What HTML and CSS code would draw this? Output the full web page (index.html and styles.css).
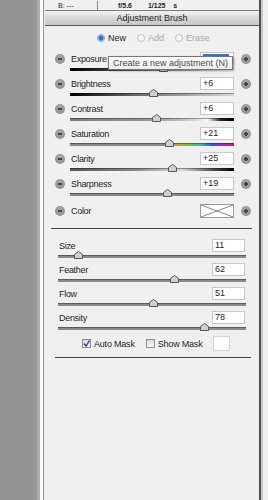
FILE: index.html
```html
<!DOCTYPE html>
<html lang="en">
<head>
  <meta charset="UTF-8">
  <title>Adjustment Brush</title>
  <link rel="stylesheet" href="styles.css">
</head>
<body>

  <div class="side"></div>
  <div class="side-edge"></div>

  <div class="panel">
    <!-- info strip -->
    <div class="info">
      <span class="info-b">B: ---</span>
      <span class="info-sep"></span>
      <span class="info-exif">f/5.6 &nbsp;1/125 s</span>
    </div>

    <div class="panel-title">Adjustment Brush</div>

    <!-- mode radios -->
    <div class="modes">
      <span class="radio on"><span class="dot"></span>New</span>
      <span class="radio off"><span class="dot"></span>Add</span>
      <span class="radio off"><span class="dot"></span>Erase</span>
    </div>

    <!-- adjustment sliders -->
    <div class="adjust">
      <div class="arow">
        <span class="pm minus"></span>
        <div class="amid">
          <div class="ahead"><span class="lbl">Exposure</span><span class="val"><span class="sel"></span></span></div>
          <div class="track t-exposure">
            <svg class="thumb" style="left:57%" width="9" height="8" viewBox="0 0 9 8"><path d="M.5 7.5V3.5L4.5.5l4 3v4z"/></svg>
          </div>
        </div>
        <span class="pm plus"></span>
        <div class="tooltip">Create a new adjustment (N)</div>
      </div>

      <div class="arow">
        <span class="pm minus"></span>
        <div class="amid">
          <div class="ahead"><span class="lbl">Brightness</span><span class="val">+6</span></div>
          <div class="track t-bright">
            <svg class="thumb" style="left:51%" width="9" height="8" viewBox="0 0 9 8"><path d="M.5 7.5V3.5L4.5.5l4 3v4z"/></svg>
          </div>
        </div>
        <span class="pm plus"></span>
      </div>

      <div class="arow">
        <span class="pm minus"></span>
        <div class="amid">
          <div class="ahead"><span class="lbl">Contrast</span><span class="val">+6</span></div>
          <div class="track t-contrast">
            <svg class="thumb" style="left:53%" width="9" height="8" viewBox="0 0 9 8"><path d="M.5 7.5V3.5L4.5.5l4 3v4z"/></svg>
          </div>
        </div>
        <span class="pm plus"></span>
      </div>

      <div class="arow">
        <span class="pm minus"></span>
        <div class="amid">
          <div class="ahead"><span class="lbl">Saturation</span><span class="val">+21</span></div>
          <div class="track t-sat">
            <svg class="thumb" style="left:60.5%" width="9" height="8" viewBox="0 0 9 8"><path d="M.5 7.5V3.5L4.5.5l4 3v4z"/></svg>
          </div>
        </div>
        <span class="pm plus"></span>
      </div>

      <div class="arow">
        <span class="pm minus"></span>
        <div class="amid">
          <div class="ahead"><span class="lbl">Clarity</span><span class="val">+25</span></div>
          <div class="track t-clarity">
            <svg class="thumb" style="left:62.5%" width="9" height="8" viewBox="0 0 9 8"><path d="M.5 7.5V3.5L4.5.5l4 3v4z"/></svg>
          </div>
        </div>
        <span class="pm plus"></span>
      </div>

      <div class="arow">
        <span class="pm minus"></span>
        <div class="amid">
          <div class="ahead"><span class="lbl">Sharpness</span><span class="val">+19</span></div>
          <div class="track t-sharp">
            <svg class="thumb" style="left:59.5%" width="9" height="8" viewBox="0 0 9 8"><path d="M.5 7.5V3.5L4.5.5l4 3v4z"/></svg>
          </div>
        </div>
        <span class="pm plus"></span>
      </div>

      <div class="crow">
        <span class="pm minus"></span>
        <div class="cmid">
          <span class="lbl">Color</span>
          <svg class="swatch" width="34" height="14" viewBox="0 0 34 14">
            <rect x=".5" y=".5" width="33" height="13" fill="#fff" stroke="#9a9a9a"/>
            <path d="M1 1L33 13M33 1L1 13" stroke="#6a6a6a" stroke-width=".8" fill="none"/>
          </svg>
        </div>
        <span class="pm plus"></span>
      </div>
    </div>

    <div class="rule"></div>

    <!-- brush settings -->
    <div class="brush">
      <div class="brow">
        <div class="bhead"><span class="lbl">Size</span><span class="val">11</span></div>
        <div class="track t-plain">
          <svg class="thumb" style="left:11%" width="9" height="8" viewBox="0 0 9 8"><path d="M.5 7.5V3.5L4.5.5l4 3v4z"/></svg>
        </div>
      </div>
      <div class="brow">
        <div class="bhead"><span class="lbl">Feather</span><span class="val">62</span></div>
        <div class="track t-plain">
          <svg class="thumb" style="left:62%" width="9" height="8" viewBox="0 0 9 8"><path d="M.5 7.5V3.5L4.5.5l4 3v4z"/></svg>
        </div>
      </div>
      <div class="brow">
        <div class="bhead"><span class="lbl">Flow</span><span class="val">51</span></div>
        <div class="track t-plain">
          <svg class="thumb" style="left:51%" width="9" height="8" viewBox="0 0 9 8"><path d="M.5 7.5V3.5L4.5.5l4 3v4z"/></svg>
        </div>
      </div>
      <div class="brow">
        <div class="bhead"><span class="lbl">Density</span><span class="val">78</span></div>
        <div class="track t-plain">
          <svg class="thumb" style="left:78%" width="9" height="8" viewBox="0 0 9 8"><path d="M.5 7.5V3.5L4.5.5l4 3v4z"/></svg>
        </div>
      </div>
    </div>

    <div class="masks">
      <span class="check">
        <span class="box"><svg width="7" height="7" viewBox="0 0 7 7"><path d="M1 3.5l2 2.5L6.5.5" stroke="#213f86" stroke-width="1.3" fill="none"/></svg></span>
        Auto Mask
      </span>
      <span class="check">
        <span class="box"></span>
        Show Mask
      </span>
      <span class="mask-swatch"></span>
    </div>

    <div class="rule rule-low"></div>
  </div>

  <div class="panel-end"></div>

</body>
</html>
```

FILE: styles.css
```css
* {
  box-sizing: border-box;
}

body {
  margin: 0;
  height: 500px;
  display: flex;
  overflow: hidden;
  background: #f0f0f0;
  font-family: 'Liberation Sans', Arial, sans-serif;
  font-size: 9px;
  color: #1e1e1e;
}

/* left gray area and panel borders */
.side {
  flex: 0 0 33px;
  background: #939393;
}

.side-edge {
  flex: 0 0 12px;
  background: linear-gradient(to right, #979797 0 4px, #adadad 4px 7px, #fbfbfb 7px 10px, #9d9d9d 10px 11px, #e6e6e6 11px 12px);
}

.panel {
  flex: 0 0 214px;
  background: #f0f0f0;
}

.panel-end {
  flex: 1;
  background: linear-gradient(to right, #4f4f4f 0 2px, #cacaca 2px 4px, #f0f0f0 4px);
}

/* info strip */
.info {
  height: 11px;
  border-bottom: 1px solid #7b7b7b;
  display: flex;
  align-items: center;
  padding-left: 13px;
  font-size: 7px;
  line-height: 9px;
}

.info-b {
  width: 39px;
}

.info-sep {
  width: 1px;
  height: 9px;
  background: #8a8a8a;
}

.info-exif {
  margin-left: 20px;
  font-weight: bold;
  word-spacing: 6px;
}

/* title bar */
.panel-title {
  height: 15px;
  border-bottom: 1px solid #555;
  background: linear-gradient(#f3f3f3, #d6d6d6 55%, #c6c6c6);
  text-align: center;
  line-height: 14px;
  color: #222;
}

/* radios */
.modes {
  display: flex;
  gap: 11px;
  height: 13px;
  margin: 5px 0 8px;
  padding-left: 52px;
}

.radio {
  display: flex;
  align-items: center;
  gap: 3px;
}

.radio .dot {
  width: 8px;
  height: 8px;
  border-radius: 50%;
  border: 1px solid #c4c4c4;
  background: #f6f6f6;
}

.radio.on {
  color: #1e1e1e;
}

.radio.on .dot {
  border-color: #8aa0c0;
  background: radial-gradient(circle, #2b6fd4 0 2px, #7eaae6 2.5px, #e6eef8 3.5px);
}

.radio.off {
  color: #a9a9a9;
}

/* adjustment rows */
.arow {
  position: relative;
  display: flex;
  align-items: flex-start;
  height: 25px;
  padding: 0 8px 0 10px;
}

.amid {
  flex: 0 0 164px;
  margin: 0 7px 0 5px;
}

.ahead,
.bhead {
  display: flex;
  justify-content: space-between;
  align-items: center;
  height: 13px;
}

.lbl {
  padding-left: 1px;
  letter-spacing: -0.3px;
}

.val {
  width: 34px;
  height: 13px;
  background: #fff;
  border: 1px solid #c8c8c8;
  padding-left: 2px;
  line-height: 11px;
}

.sel {
  display: block;
  width: 26px;
  height: 9px;
  margin-top: 1px;
  background: #3a74c8;
}

.pm {
  position: relative;
  flex: 0 0 10px;
  height: 10px;
  margin-top: 2px;
  border-radius: 50%;
  background: radial-gradient(circle at 50% 35%, #a8a8a8, #8a8a8a);
}

.pm::before {
  content: '';
  position: absolute;
  left: 3px;
  top: 4px;
  width: 4px;
  height: 2px;
  background: #444;
}

.plus::after {
  content: '';
  position: absolute;
  left: 4px;
  top: 3px;
  width: 2px;
  height: 4px;
  background: #444;
}

/* slider tracks */
.track {
  position: relative;
  height: 3px;
  margin: 3px 0;
  box-shadow: inset 0 1px 0 rgba(0, 0, 0, 0.35);
}

.t-exposure {
  background: linear-gradient(to right, #000, #777 50%, #fff);
}

.t-bright {
  background: linear-gradient(to right, #000, #6a6a6a 40%, #d8d8d8);
}

.t-contrast {
  background: linear-gradient(to right, #7c7c7c, #999 50%, #c8c8c8 72%, #fafafa 84%, #222 92%, #000);
}

.t-sat {
  background: linear-gradient(to right, #888 0, #8a8a8a 58%, #c89a3a 66%, #79b843 73%, #3ab3b8 80%, #3c54cf 87%, #9a33c4 93%, #d21f45);
}

.t-clarity {
  background: linear-gradient(to right, #555, #8a8a8a 40%, #dadada 68%, #4a4a4a 88%, #000);
}

.t-sharp,
.t-plain {
  background: #8a8a8a;
}

.thumb {
  position: absolute;
  top: -4px;
  margin-left: -4.5px;
  fill: #d0d0d0;
  stroke: #575757;
  stroke-width: 1;
}

/* tooltip over the exposure row */
.tooltip {
  position: absolute;
  left: 63px;
  top: 4px;
  height: 14px;
  padding: 0 4px;
  border: 1px solid #767676;
  background: linear-gradient(#ffffff, #eaeaf0);
  box-shadow: 1px 1px 2px rgba(0, 0, 0, 0.35);
  color: #4c4c4c;
  line-height: 12px;
  white-space: nowrap;
  z-index: 2;
}

/* color row */
.crow {
  display: flex;
  align-items: center;
  height: 14px;
  margin-top: 2px;
  padding: 0 8px 0 10px;
}

.crow .pm {
  margin-top: 0;
}

.cmid {
  flex: 0 0 164px;
  margin: 0 7px 0 5px;
  display: flex;
  justify-content: space-between;
  align-items: center;
}

.swatch {
  display: block;
}

.rule {
  border-top: 1px solid #474747;
  margin: 10px 7px 0 6px;
}

.rule-low {
  margin: 6px 8px 0 10px;
}

/* brush settings */
.brush {
  padding: 10px 13px 0;
}

.brow {
  height: 24px;
}

.bhead .val {
  width: 33px;
  margin-right: 1px;
}

/* mask checkboxes */
.masks {
  display: flex;
  align-items: center;
  gap: 11px;
  height: 15px;
  margin-top: 1px;
  padding-left: 37px;
}

.check {
  display: flex;
  align-items: center;
  gap: 3px;
  letter-spacing: -0.2px;
}

.box {
  display: flex;
  align-items: center;
  justify-content: center;
  width: 9px;
  height: 9px;
  border: 1px solid #8e8f8f;
  background: linear-gradient(#d8d8d8, #fafafa);
}

.mask-swatch {
  width: 17px;
  height: 15px;
  background: #fff;
  border: 1px solid #d2d2d2;
}
```
